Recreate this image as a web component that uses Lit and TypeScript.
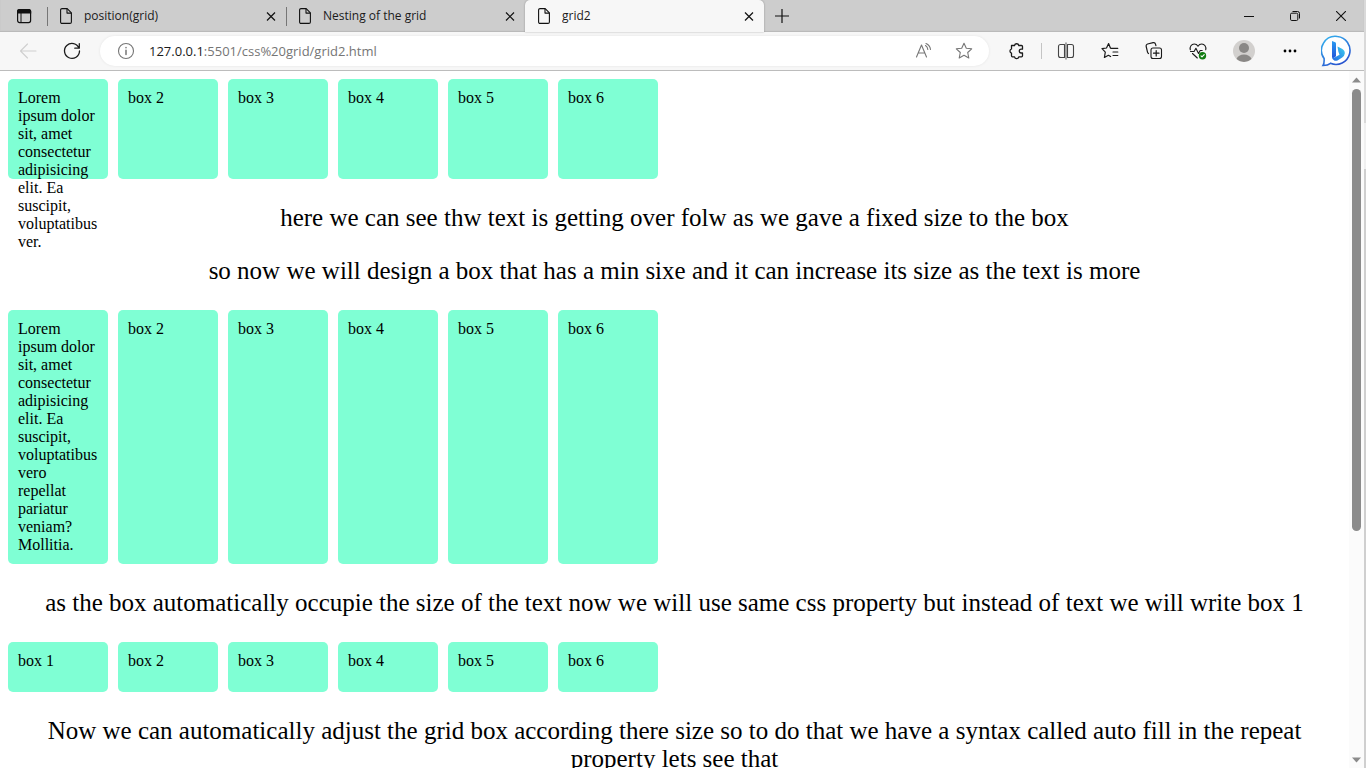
import { LitElement, html, css, svg } from "lit";
import { customElement, property } from "lit/decorators.js";
import { classMap } from "lit/directives/class-map.js";

const fileIcon = html`<svg class="file" width="12" height="16" viewBox="0 0 12 16" fill="none" stroke="#111" stroke-width="1.1" stroke-linejoin="round" aria-hidden="true">
  <path d="M2 .6h5.2l4.2 4.3v9.1a1.4 1.4 0 0 1-1.4 1.4H2A1.4 1.4 0 0 1 .6 14V2A1.4 1.4 0 0 1 2 .6z" />
  <path d="M7 .8v4.3h4.3" />
</svg>`;

const closeIcon = html`<svg width="16" height="16" viewBox="0 0 16 16" stroke="#111" stroke-width="1.2" aria-hidden="true">
  <path d="M4 4.5l8 8M12 4.5l-8 8" />
</svg>`;

const icon = (body: unknown, color = "#1b1b1b", size = 20) => html`<svg width=${size} height=${size} viewBox="0 0 20 20" fill="none" stroke=${color} stroke-width="1.1" stroke-linecap="round" stroke-linejoin="round" aria-hidden="true">${body}</svg>`;

const star = svg`<path d="M10 2.2l2.3 5 5.4.6-4 3.7 1.1 5.5-4.8-2.7L5.2 17l1.1-5.5-4-3.7 5.4-.6z" />`;

@customElement("browser-tab")
class BrowserTab extends LitElement {
  @property() label = "";
  @property({ type: Boolean }) active = false;

  static styles = css`
    :host {
      flex: 0 1 239px;
      min-width: 0;
    }
    .tab {
      display: flex;
      align-items: center;
      height: 32px;
      padding: 0 7px 0 12px;
      box-sizing: border-box;
      background: linear-gradient(#767676, #767676) 0 7px / 1px 19px no-repeat;
    }
    .active {
      background: #f7f7f7;
      border-radius: 5px 5px 0 0;
      box-shadow: 0 0 2px #00000055;
    }
    .file {
      flex: none;
      margin-left: 1px;
    }
    .label {
      flex: 1;
      margin-left: 12px;
      white-space: nowrap;
      overflow: hidden;
    }
    button {
      display: flex;
      padding: 0;
      border: 0;
      background: none;
    }
  `;

  render() {
    return html`<div class=${classMap({ tab: true, active: this.active })} role="tab" aria-selected=${this.active}>
      ${fileIcon}<span class="label">${this.label}</span>
      <button aria-label="Close tab">${closeIcon}</button>
    </div>`;
  }
}

@customElement("box-grid")
class BoxGrid extends LitElement {
  @property() rows = "fixed";
  @property() first = "box 1";

  static styles = css`
    :host {
      display: block;
    }
    .grid {
      display: grid;
      grid-template-columns: repeat(6, 100px);
      gap: 10px;
    }
    .fixed {
      grid-auto-rows: 100px;
    }
    .growing {
      grid-auto-rows: minmax(50px, auto);
    }
    .box {
      box-sizing: border-box;
      padding: 10px;
      border-radius: 5px;
      background: aquamarine;
    }
  `;

  render() {
    const labels = [this.first, "box 2", "box 3", "box 4", "box 5", "box 6"];
    return html`<div class="grid ${this.rows}">${labels.map((t) => html`<div class="box">${t}</div>`)}</div>`;
  }
}

@customElement("app-root")
class AppRoot extends LitElement {
  static styles = css`
    :host {
      display: flex;
      height: 100vh;
      overflow: hidden;
      background: #fff;
      font: 12px/16px "Open Sans", "Noto Sans", sans-serif;
      color: #1b1b1b;
    }
    button {
      display: flex;
      align-items: center;
      justify-content: center;
      padding: 0;
      border: 0;
      background: none;
    }
    svg {
      display: block;
      flex: none;
    }
    .browser {
      display: flex;
      flex-direction: column;
      flex: 1;
      min-width: 0;
    }
    .strip {
      display: flex;
      height: 32px;
      background: #cdcdcd;
      box-shadow: inset 0 -1px 1px #b8b8b8;
    }
    .tabmenu {
      width: 47px;
    }
    .new {
      width: 36px;
    }
    .window {
      display: flex;
      margin-left: auto;
    }
    .window button {
      width: 46px;
    }
    .toolbar {
      display: flex;
      align-items: center;
      height: 38px;
      padding: 0 9px 0 6px;
      background: #f7f7f7;
      border-bottom: 1px solid #bcbcbc;
    }
    .nav {
      width: 44px;
      height: 30px;
    }
    .address {
      display: flex;
      align-items: center;
      flex: 1;
      height: 30px;
      margin-left: 6px;
      padding: 0 15px 0 16px;
      box-sizing: border-box;
      border-radius: 15px;
      background: #fff;
      box-shadow: 0 0 3px #00000014;
      font-size: 13px;
    }
    .url {
      flex: 1;
      margin-left: 13px;
      white-space: nowrap;
    }
    .rest {
      color: #757575;
    }
    .read {
      margin-right: 20px;
    }
    .tools {
      display: flex;
      align-items: center;
      gap: 14px;
      margin-left: 13px;
    }
    .tools button {
      width: 30px;
      height: 30px;
    }
    .divider {
      width: 1px;
      height: 16px;
      margin: 0 -5px;
      background: #c4c4c4;
    }
    .tools .profile {
      width: 34px;
    }
    .tools .bing {
      width: 36px;
      height: 36px;
    }
    .viewport {
      display: flex;
      flex: 1;
      min-height: 0;
    }
    .page {
      flex: 1;
      min-width: 0;
      padding: 8px;
      overflow: hidden;
      font: 16px/18px "Liberation Serif", "Times New Roman", serif;
      color: #000;
    }
    p {
      margin: 25px 0;
      text-align: center;
      font-size: 25px;
      line-height: 28px;
    }
    .scroll {
      display: flex;
      flex-direction: column;
      align-items: center;
      width: 15px;
      padding: 6px 0 5px;
      box-sizing: border-box;
      background: #fbfbfb;
    }
    .thumb {
      width: 9px;
      height: 64.5%;
      margin: 6px 0 auto;
      border-radius: 5px;
      background: #8b8b8b;
    }
    .edge {
      width: 2px;
      background: linear-gradient(#d9d9d9 123px, #f0f0f0 123px, #f0f0f0 169px, #cfcfcf 169px);
    }
  `;

  render() {
    return html`
      <div class="browser">
        <header>
          <div class="strip" role="tablist">
            <button class="tabmenu" aria-label="Tab actions">
              <svg width="16" height="16" viewBox="0 0 16 16" fill="none" stroke="#111" stroke-width="1.2">
                <rect x="1.6" y="1.6" width="13" height="13" rx="2" />
                <path d="M1.6 5V3.4a1.8 1.8 0 0 1 1.8-1.8h9.4a1.8 1.8 0 0 1 1.8 1.8V5z" fill="#111" />
                <path d="M5 5v9.5" stroke-width="1" />
              </svg>
            </button>
            <browser-tab label="position(grid)"></browser-tab>
            <browser-tab label="Nesting of the grid"></browser-tab>
            <browser-tab label="grid2" active></browser-tab>
            <button class="new" aria-label="New tab">
              <svg width="14" height="14" viewBox="0 0 14 14" stroke="#111" stroke-width="1.2"><path d="M0 7h14M7 0v14" /></svg>
            </button>
            <div class="window">
              <button aria-label="Minimize"><svg width="10" height="10" viewBox="0 0 10 10" stroke="#111"><path d="M0 5.5h10" /></svg></button>
              <button aria-label="Restore">
                <svg width="10" height="10" viewBox="0 0 10 10" fill="none" stroke="#111">
                  <rect x=".5" y="2.2" width="7.3" height="7.3" rx="1.3" />
                  <path d="M2.5.5h5a2 2 0 0 1 2 2v5" />
                </svg>
              </button>
              <button aria-label="Close window"><svg width="10" height="10" viewBox="0 0 10 10" stroke="#111" stroke-width="1.1"><path d="M0 0l10 10M10 0L0 10" /></svg></button>
            </div>
          </div>
          <div class="toolbar">
            <button class="nav" aria-label="Back" disabled>${icon(svg`<path d="M18 10H2.5M9.5 3L2.5 10l7 7" />`, "#cfcfcf")}</button>
            <button class="nav" aria-label="Refresh">${icon(svg`<path d="M17 7.2A7.5 7.5 0 1 0 17.5 10M17.3 2.7v4.5h-4.5" stroke-width="1.3" />`)}</button>
            <div class="address">
              ${icon(svg`<circle cx="10" cy="10" r="7.5" /><path d="M10 9.2v4.3M10 6.4v.4" stroke-width="1.5" />`, "#767676")}
              <span class="url">127.0.0.1<span class="rest">:5501/css%20grid/grid2.html</span></span>
              <button class="read" aria-label="Read aloud">${icon(svg`<path d="M2.5 16L7.5 4l5 12M4.2 12h6.6M11.5 4.5a5 5 0 0 1 2.3 4M12 2.5a7.5 7.500 0 0 1 4.5 6" />`, "#767676")}</button>
              <button aria-label="Add to favorites">${icon(star, "#767676")}</button>
            </div>
            <div class="tools">
              <button aria-label="Extensions">${icon(svg`<path d="M4.500 4.500h3a2.200 2.200 0 0 1 4.300 0h2.700a1 1 0 0 1 1 1v2.700h-1.300a1.900 1.900 0 0 0 0 3.800h1.300v2.800a1 1 0 0 1-1 1h-2.700a2.200 2.200 0 0 1-4.300 0h-2a1 1 0 0 1-1-1v-2.600a2.200 2.200 0 0 1 0-4.200z" stroke-width="1.3" />`)}</button>
              <span class="divider"></span>
              <button aria-label="Split screen">${icon(svg`<path d="M8.500 3.500h-4a2 2 0 0 0-2 2v9a2 2 0 0 0 2 2h4zM11.500 3.500h4a2 2 0 0 1 2 2v9a2 2 0 0 1-2 2h-4z" stroke="#444" /><path d="M10 2v16" stroke="#777" stroke-width="1.3" />`)}</button>
              <button aria-label="Favorites">${icon(svg`<path d="M11 7.3h6.8M13 11h4.8M13 14.5h4.8M10.5 7.2L8.600 2.600 6.500 7 2 7.700l3.300 3.400-.9 5.400 4-2.200 2.200 1.200" stroke-width="1.2" />`)}</button>
              <button aria-label="Collections">${icon(svg`<rect x="7" y="7" width="10.5" height="10.5" rx="2" /><path d="M12.2 9.5v5.500M9.500 12.200h5.500M4.500 12.500a2 2 0 0 1-1-1.300L2.200 5.500A2 2 0 0 1 3.600 3l5.500-1.300a2 2 0 0 1 2.400 1.400l.4 1.500" stroke-width="1.2" />`)}</button>
              <button aria-label="Browser essentials">${icon(svg`<path d="M2.300 8.800C1.500 5.800 3.500 3 6.200 3 8 3 9.300 4 10 5.200 10.700 4 12 3 13.800 3c2.700 0 4.700 2.800 3.900 5.800M2.500 10.500h3.600l1.800-3.200 2.600 5.200 1.700-3h2M4.500 12.500L9.300 17" /><circle cx="14.5" cy="14.7" r="3.7" fill="#107c10" stroke="none" /><path d="M13 14.900l1 1 2.200-2.300" stroke="#fff" />`)}</button>
              <button class="profile" aria-label="Profile">
                <svg width="22" height="22" viewBox="0 0 22 22">
                  <circle cx="11" cy="11" r="11" fill="#d2d0ce" />
                  <circle cx="11" cy="8" r="5" fill="#8a8886" />
                  <path d="M3.500 19c1-3 4-4.500 7.500-4.500s6.500 1.500 7.500 4.500A11 11 0 0 1 3.500 19z" fill="#8a8886" />
                </svg>
              </button>
              <button aria-label="Settings and more">
                <svg width="14" height="4" viewBox="0 0 14 4"><circle cx="2" cy="2" r="1.4" /><circle cx="7" cy="2" r="1.4" /><circle cx="12" cy="2" r="1.4" /></svg>
              </button>
              <button class="bing" aria-label="Discover">
                <svg width="32" height="32" viewBox="0 0 32 32">
                  <defs>
                    <linearGradient id="ring" x1="0" y1="0" x2="0.6" y2="1"><stop offset="0" stop-color="#33b6f0" /><stop offset="1" stop-color="#2a55cf" /></linearGradient>
                    <linearGradient id="letter" x1="0" y1="0" x2="0" y2="1"><stop offset="0" stop-color="#2a9cf2" /><stop offset="1" stop-color="#2352d8" /></linearGradient>
                    <linearGradient id="bowl" x1="1" y1="0" x2="0" y2="1"><stop offset="0" stop-color="#3fd0ee" /><stop offset="1" stop-color="#2268e4" /></linearGradient>
                  </defs>
                  <path d="M16.500 1.500A14 14 0 1 1 9.500 28.300c-2 1.700-4.500 2.200-7.500 2.200 1-1.500 1.300-3.800 1.100-7A14 14 0 0 1 16.500 1.500z" fill="#fff" stroke="url(#ring)" stroke-width="1.6" />
                  <path d="M11 6l3.200 1.200q.8.400.8 1.300v12.700L12 23.500q-1-.6-1-2z" fill="url(#letter)" />
                  <path d="M16.500 11.500l4.500 2.300q3 1.700 2.800 4.700-.3 2.600-2.600 4l-4.700 2.900q-1.700.8-3.300.1-2-1-2.200-3.500 1.700 1 3.500 0l4-2.300-1.200-3.300z" fill="url(#bowl)" />
                </svg>
              </button>
            </div>
          </div>
        </header>
        <div class="viewport">
          <main class="page">
            <box-grid rows="fixed" first="Lorem ipsum dolor sit, amet consectetur adipisicing elit. Ea suscipit, voluptatibus ver."></box-grid>
            <p>here we can see thw text is getting over folw as we gave a fixed size to the box</p>
            <p>so now we will design a box that has a min sixe and it can increase its size as the text is more</p>
            <box-grid rows="growing" first="Lorem ipsum dolor sit, amet consectetur adipisicing elit. Ea suscipit, voluptatibus vero repellat pariatur veniam? Mollitia."></box-grid>
            <p>as the box automatically occupie the size of the text now we will use same css property but instead of text we will write box 1</p>
            <box-grid rows="growing"></box-grid>
            <p>Now we can automatically adjust the grid box according there size so to do that we have a syntax called auto fill in the repeat property lets see that</p>
          </main>
          <div class="scroll" aria-hidden="true">
            <svg width="9" height="6" viewBox="0 0 9 6"><path d="M4.500 .5L9 5.500H0z" fill="#8b8b8b" /></svg>
            <div class="thumb"></div>
            <svg width="9" height="6" viewBox="0 0 9 6"><path d="M4.500 5.500L0 .5h9z" fill="#8b8b8b" /></svg>
          </div>
        </div>
      </div>
      <div class="edge"></div>
    `;
  }
}
